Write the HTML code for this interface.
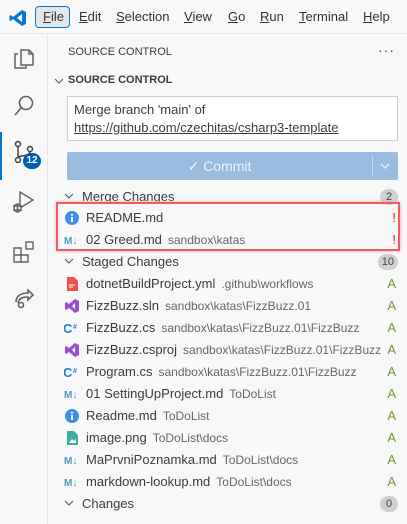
<!DOCTYPE html>
<html><head><style>
*{box-sizing:border-box;margin:0;padding:0}
body{width:407px;height:524px;overflow:hidden;background:#f8f8f8;font-family:"Liberation Sans",sans-serif;font-size:13px;color:#3b3b3b;position:relative}
.menu{position:absolute;left:0;top:0;width:407px;height:34px;background:#f8f8f8;border-bottom:1px solid #e5e5e5}
.menu span{position:absolute;top:9px;font-size:13px;color:#333}
.menu u{text-decoration:underline}
.act{position:absolute;left:0;top:34px;width:48px;height:490px;border-right:1px solid #e5e5e5}
.abs{position:absolute}
.row{position:absolute;left:56px;width:344px;height:22px;line-height:22px;white-space:nowrap}
.row .ic{position:absolute;left:8px;top:3px;width:16px;height:16px}
.row .nm{position:absolute;left:30px;color:#3b3b3b}
.row .nm small{font-size:12px;color:#666;margin-left:6px}
.row .st{position:absolute;right:4px;color:#6a9a3a}
.hd{position:absolute;left:56px;width:344px;height:22px;line-height:22px}
.hd .nm{position:absolute;left:26px}
.hd .chev{position:absolute;left:7px;top:4px}
.badge{position:absolute;right:2px;top:3px;min-width:18px;height:16px;border-radius:8px;background:#d0d0d0;font-size:11px;line-height:16px;text-align:center;color:#444;padding:0 4px}
</style></head><body>
<div class="menu">
 <svg class="abs" style="left:9px;top:9px" width="18" height="18" viewBox="0 0 18 18"><path d="M13 1 L17 3 V15 L13 17 L4 10 L1.5 12 L0.5 11 V7 L1.5 6 L4 8 Z M13 5 L8 9 L13 13 Z" fill="#0078d4"/></svg>
 <div class="abs" style="left:35px;top:6px;width:35px;height:22px;border:1px solid #0078d4;border-radius:4px;background:#e6e6e6"></div>
 <span style="left:43px"><u>F</u>ile</span>
 <span style="left:79px"><u>E</u>dit</span>
 <span style="left:116px"><u>S</u>election</span>
 <span style="left:184px"><u>V</u>iew</span>
 <span style="left:228px"><u>G</u>o</span>
 <span style="left:260px"><u>R</u>un</span>
 <span style="left:299px"><u>T</u>erminal</span>
 <span style="left:363px"><u>H</u>elp</span>
</div>
<div class="act">
 <svg class="abs" style="left:12px;top:12px" width="24" height="24" viewBox="0 0 24 24" fill="none" stroke="#616161" stroke-width="1.5"><path d="M9 4h8l4 4v11H9z M17 4v4h4"/><path d="M6 8H3v14h11v-3"/></svg>
 <svg class="abs" style="left:12px;top:60px" width="24" height="24" viewBox="0 0 24 24" fill="none" stroke="#616161" stroke-width="1.6"><circle cx="14" cy="9" r="6.5"/><path d="M9.5 13.5L3 21"/></svg>
 <div class="abs" style="left:0;top:98px;width:2px;height:48px;background:#0078d4"></div>
 <svg class="abs" style="left:12px;top:106px" width="28" height="28" viewBox="0 0 28 28" fill="none" stroke="#424242" stroke-width="1.5"><circle cx="6" cy="4" r="2.5"/><circle cx="18" cy="9" r="2.5"/><circle cx="6" cy="20" r="2.5"/><path d="M6 6.5v11 M18 11.5c0 5-12 4-12 6"/></svg>
 <div class="abs" style="left:23px;top:119px;width:18px;height:16px;border-radius:8px;background:#005fb8;color:#fff;font-size:10px;font-weight:bold;line-height:16px;text-align:center">12</div>
 <svg class="abs" style="left:11px;top:156px" width="26" height="26" viewBox="0 0 26 26" fill="none" stroke="#616161" stroke-width="1.4"><path d="M9 2l13 8-13 8z"/><ellipse cx="6.5" cy="18" rx="3.5" ry="4" fill="#f8f8f8"/><path d="M2 16h9M2 20h9M6.5 14v8"/></svg>
 <svg class="abs" style="left:12px;top:206px" width="24" height="24" viewBox="0 0 24 24" fill="none" stroke="#616161" stroke-width="1.4"><path d="M2 8h7v7h7v7H2z M2 15h7v7"/><rect x="14" y="2" width="7" height="7"/></svg>
 <svg class="abs" style="left:12px;top:252px" width="24" height="24" viewBox="0 0 24 24" fill="none" stroke="#616161" stroke-width="1.6"><path d="M4 16c0-6 5-9 12-9V4l5 5-5 5v-3c-5 0-9 1-10 6"/><circle cx="9" cy="19" r="2.5"/></svg>
</div>
<div class="abs" style="left:68px;top:46px;font-size:11px;color:#3b3b3b">SOURCE CONTROL</div>
<div class="abs" style="left:378px;top:42px;font-size:14px;color:#424242;letter-spacing:1px">···</div>
<svg class="abs" style="left:54px;top:76px" width="10" height="10" viewBox="0 0 10 10"><path d="M1 3l4 4 4-4" fill="none" stroke="#555" stroke-width="1"/></svg>
<div class="abs" style="left:68px;top:74px;font-size:11px;font-weight:bold;color:#3b3b3b">SOURCE CONTROL</div>
<div class="abs" style="left:67px;top:96px;width:331px;height:45px;background:#fff;border:1px solid #cecece;padding:4px 6px;line-height:18px;font-size:13px">Merge branch 'main' of<br><span style="text-decoration:underline">https://github.com/czechitas/csharp3-template</span></div>
<div class="abs" style="left:67px;top:152px;width:331px;height:28px;background:#99bde0;border-radius:2px;color:#eef4fb;line-height:28px;text-align:center;font-size:14px"><span style="margin-right:26px">✓ Commit</span></div>
<div class="abs" style="left:372px;top:156px;width:1px;height:20px;background:#c8dcf0"></div>
<svg class="abs" style="left:379px;top:160px" width="12" height="12" viewBox="0 0 12 12"><path d="M2 4l4 4 4-4" fill="none" stroke="#eef4fb" stroke-width="1.3"/></svg>

<div class="hd" style="top:186px"><svg class="chev" width="12" height="12" viewBox="0 0 12 12"><path d="M2 4l4 4 4-4" fill="none" stroke="#555"/></svg><span class="nm">Merge Changes</span><span class="badge">2</span></div>
<div class="abs" style="left:56px;top:202px;width:344px;height:49px;border:2px solid #f05a64;box-shadow:0 0 3px #f59aa0"></div>
<div class="row" style="top:207px"><svg class="ic" viewBox="0 0 16 16"><circle cx="8" cy="8" r="7" fill="#3d8ee8"/><rect x="7" y="7" width="2" height="5" fill="#fff"/><circle cx="8" cy="4.8" r="1.1" fill="#fff"/></svg><span class="nm">README.md</span><span class="st" style="color:#e51400">!</span></div>
<div class="row" style="top:229px"><svg class="ic" viewBox="0 0 16 16"><text x="0" y="12" font-size="10" font-weight="bold" fill="#519aba" font-family="Liberation Sans">M↓</text></svg><span class="nm">02 Greed.md<small>sandbox\katas</small></span><span class="st" style="color:#e51400">!</span></div>

<div class="hd" style="top:251px"><svg class="chev" width="12" height="12" viewBox="0 0 12 12"><path d="M2 4l4 4 4-4" fill="none" stroke="#555"/></svg><span class="nm">Staged Changes</span><span class="badge">10</span></div>
<div class="row" style="top:273px"><svg class="ic" viewBox="0 0 16 16"><path d="M3 1h7l4 4v10H3z" fill="#e8534f"/><path d="M5 9h6M5 11h4" stroke="#fff"/></svg><span class="nm">dotnetBuildProject.yml<small>.github\workflows</small></span><span class="st">A</span></div>
<div class="row" style="top:295px"><svg class="ic" viewBox="0 0 16 16"><path d="M11 1l4 2v10l-4 2-6-5-3 2-1-1V5l1-1 3 2z M11 5L8 8l3 3z" fill="#9b4fd0"/></svg><span class="nm">FizzBuzz.sln<small>sandbox\katas\FizzBuzz.01</small></span><span class="st">A</span></div>
<div class="row" style="top:317px"><svg class="ic" viewBox="0 0 16 16"><text x="-1" y="13" font-size="13" font-weight="bold" fill="#1a7fd4" font-family="Liberation Sans">C</text><text x="9" y="9" font-size="7" font-weight="bold" fill="#1a7fd4" font-family="Liberation Sans">#</text></svg><span class="nm">FizzBuzz.cs<small>sandbox\katas\FizzBuzz.01\FizzBuzz</small></span><span class="st">A</span></div>
<div class="row" style="top:339px"><svg class="ic" viewBox="0 0 16 16"><path d="M11 1l4 2v10l-4 2-6-5-3 2-1-1V5l1-1 3 2z M11 5L8 8l3 3z" fill="#9b4fd0"/></svg><span class="nm">FizzBuzz.csproj<small>sandbox\katas\FizzBuzz.01\FizzBuzz</small></span><span class="st">A</span></div>
<div class="row" style="top:361px"><svg class="ic" viewBox="0 0 16 16"><text x="-1" y="13" font-size="13" font-weight="bold" fill="#1a7fd4" font-family="Liberation Sans">C</text><text x="9" y="9" font-size="7" font-weight="bold" fill="#1a7fd4" font-family="Liberation Sans">#</text></svg><span class="nm">Program.cs<small>sandbox\katas\FizzBuzz.01\FizzBuzz</small></span><span class="st">A</span></div>
<div class="row" style="top:383px"><svg class="ic" viewBox="0 0 16 16"><text x="0" y="12" font-size="10" font-weight="bold" fill="#519aba" font-family="Liberation Sans">M↓</text></svg><span class="nm">01 SettingUpProject.md<small>ToDoList</small></span><span class="st">A</span></div>
<div class="row" style="top:405px"><svg class="ic" viewBox="0 0 16 16"><circle cx="8" cy="8" r="7" fill="#3d8ee8"/><rect x="7" y="7" width="2" height="5" fill="#fff"/><circle cx="8" cy="4.8" r="1.1" fill="#fff"/></svg><span class="nm">Readme.md<small>ToDoList</small></span><span class="st">A</span></div>
<div class="row" style="top:427px"><svg class="ic" viewBox="0 0 16 16"><path d="M3 1h7l4 4v10H3z" fill="#3fae9a"/><path d="M5 13l3-4 2 2 2-2v4z" fill="#fff"/></svg><span class="nm">image.png<small>ToDoList\docs</small></span><span class="st">A</span></div>
<div class="row" style="top:449px"><svg class="ic" viewBox="0 0 16 16"><text x="0" y="12" font-size="10" font-weight="bold" fill="#519aba" font-family="Liberation Sans">M↓</text></svg><span class="nm">MaPrvniPoznamka.md<small>ToDoList\docs</small></span><span class="st">A</span></div>
<div class="row" style="top:471px"><svg class="ic" viewBox="0 0 16 16"><text x="0" y="12" font-size="10" font-weight="bold" fill="#519aba" font-family="Liberation Sans">M↓</text></svg><span class="nm">markdown-lookup.md<small>ToDoList\docs</small></span><span class="st">A</span></div>
<div class="hd" style="top:493px"><svg class="chev" width="12" height="12" viewBox="0 0 12 12"><path d="M2 4l4 4 4-4" fill="none" stroke="#555"/></svg><span class="nm">Changes</span><span class="badge">0</span></div>
</body></html>
